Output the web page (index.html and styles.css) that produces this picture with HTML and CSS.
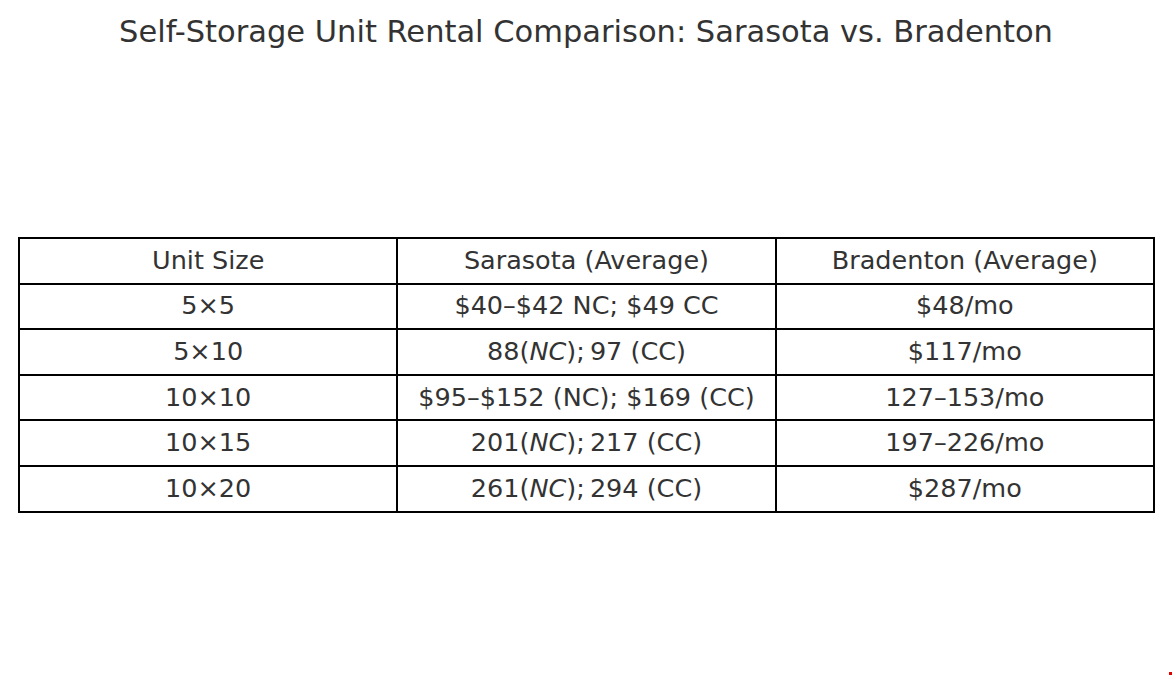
FILE: index.html
```html
<!DOCTYPE html>
<html>
<head>
<meta charset="utf-8">
<link rel="stylesheet" href="styles.css">
</head>
<body>
<div class="page">
  <h1 class="title">Self-Storage Unit Rental Comparison: Sarasota vs. Bradenton</h1>
  <table class="grid">
    <tr><td>Unit Size</td><td>Sarasota (Average)</td><td>Bradenton (Average)</td></tr>
    <tr><td>5×5</td><td>$40–$42 NC; $49 CC</td><td>$48/mo</td></tr>
    <tr><td>5×10</td><td>88(<i>NC</i>);<span class="thin"></span>97 (CC)</td><td>$117/mo</td></tr>
    <tr><td>10×10</td><td>$95–$152 (NC); $169 (CC)</td><td>127–153/mo</td></tr>
    <tr><td>10×15</td><td>201(<i>NC</i>);<span class="thin"></span>217 (CC)</td><td>197–226/mo</td></tr>
    <tr><td>10×20</td><td>261(<i>NC</i>);<span class="thin"></span>294 (CC)</td><td>$287/mo</td></tr>
  </table>
  <span class="dot"></span>
</div>
</body>
</html>
```
FILE: styles.css
```css
html, body {
  margin: 0;
  padding: 0;
  background: #ffffff;
}
.page {
  position: relative;
  width: 1172px;
  height: 675px;
  overflow: hidden;
  font-family: "DejaVu Sans", sans-serif;
  color: #333333;
}
.title {
  margin: 0;
  padding-top: 13px;
  font-size: 30.5px;
  font-weight: normal;
  line-height: 38px;
  text-align: center;
}
.grid {
  margin: 186px 0 0 18px;
  width: 1137px;
  border-collapse: collapse;
  table-layout: fixed;
  font-size: 25.5px;
}
.grid td {
  border: 2px solid #000000;
  height: 41.6px;
  padding: 0 0 2px 0;
  text-align: center;
  vertical-align: middle;
  line-height: 30px;
}
.grid i {
  font-style: oblique;
}
.thin {
  display: inline-block;
  width: 5px;
}
.dot {
  position: absolute;
  right: 0;
  bottom: 0;
  width: 3px;
  height: 3px;
  background: #e00000;
}
```
